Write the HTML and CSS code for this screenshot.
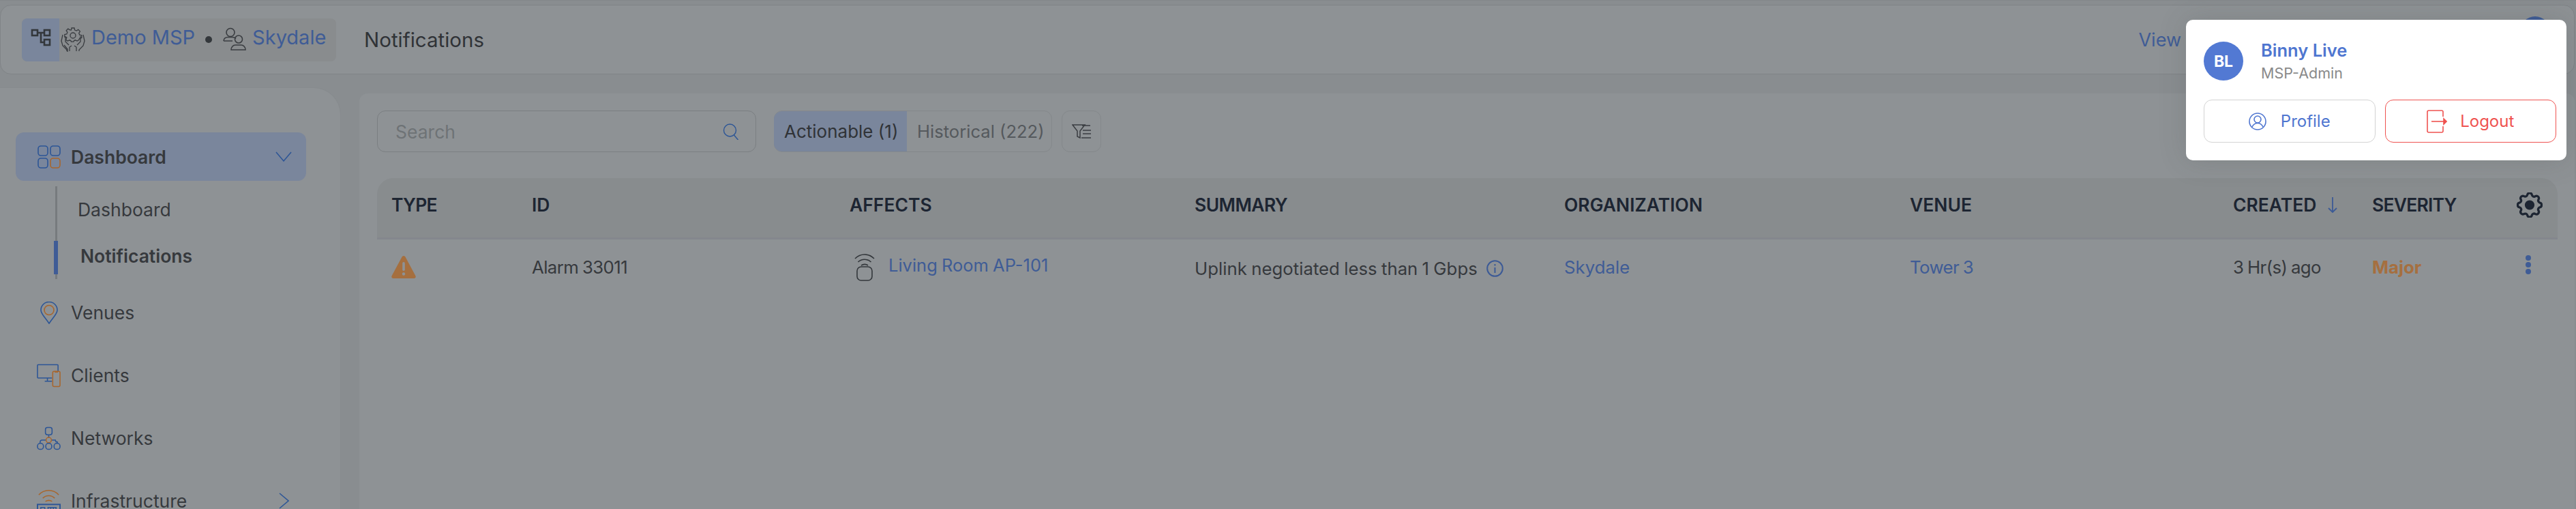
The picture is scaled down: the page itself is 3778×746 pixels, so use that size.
FILE: index.html
```html
<!DOCTYPE html>
<html lang="en">
<head>
<meta charset="utf-8">
<title>Notifications</title>
<link rel="stylesheet" href="styles.css">
</head>
<body>
<div class="page">
  <header class="topbar">
    <div class="crumbs">
      <span class="crumb-toggle">
        <svg width="30" height="26" viewBox="0 0 30 26" fill="none" stroke="#33373b" stroke-width="2.6"><rect x="2" y="2" width="8" height="8"/><rect x="20" y="2" width="8" height="8"/><rect x="20" y="16" width="8" height="8"/><path d="M10 6h10M15 6v14h5"/></svg>
      </span>
      <svg class="crumb-gear" width="36" height="36" viewBox="0 0 36 36" fill="none" stroke="#3a3d41" stroke-width="1.3"><circle cx="18" cy="12" r="4"/><path d="M16 1h4l.6 3 2.6 1.100 2.600-1.700 2.600 2.600-1.700 2.600 1.100 2.600 3 .6v3.600l-3 .6-1.200 2.600-2.400 1.500-2.800-1.300-1.800.8-.6 1.500h-3.600l-.6-1.500-1.800-.8-2.800 1.300-2.400-1.500L8.800 14.800l-3-.6v-3.600l3-.6 1.100-2.600-1.700-2.600 2.600-2.600 2.600 1.700L15.400 4z"/><path d="M3 11 1 20l2 7 6 6v2M7 13v8l5 5M10 36l0-4-5-6M33 11l2 9-2 7-6 6v2M29 13v8l-5 5M13 35v-6l3-2M23 35v-6l-3-2"/></svg>
      <a class="crumb-link crumb-msp">Demo MSP</a>
      <span class="crumb-dot"></span>
      <svg class="crumb-people" width="34" height="34" viewBox="0 0 34 34" fill="none" stroke="#3a3d41" stroke-width="1.6"><circle cx="11" cy="7.500" r="6"/><path d="M1 20c0-3.500 3-5.500 6-5.500h7c2 0 3.500.5 5 2M1 20h13"/><circle cx="23" cy="17.500" r="5.500"/><path d="M12 33c0-4 3-7 6-7h9c3 0 6 3 6 7zM12 33h21"/></svg>
      <a class="crumb-link">Skydale</a>
    </div>
    <h1 class="page-title">Notifications</h1>
    <a class="view-link">View</a>
    <span class="user-peek"></span>
  </header>

  <div class="body-row">
    <nav class="sidebar">
      <div class="nav-item nav-active">
        <span class="nav-icon">
          <svg width="34" height="34" viewBox="0 0 34 34" fill="none" stroke-width="1.600"><rect x="1" y="1" width="14" height="14" rx="4" stroke="#2c5596"/><rect x="19" y="1" width="14" height="14" rx="4" stroke="#2c5596"/><rect x="1" y="19" width="14" height="14" rx="4" stroke="#2c5596"/><rect x="19" y="19" width="14" height="14" rx="4" stroke="#a8662d"/></svg>
        </span>
        <span class="nav-label">Dashboard</span>
        <svg class="nav-chevron" width="24" height="15" viewBox="0 0 24 15" fill="none" stroke="#2c5596" stroke-width="1.500"><path d="M1 1l11 13L23 1"/></svg>
      </div>
      <div class="sub-list">
        <div class="sub-item">Dashboard</div>
        <div class="sub-item sub-current">Notifications</div>
      </div>
      <div class="nav-item">
        <span class="nav-icon">
          <svg width="26" height="33" viewBox="0 0 26 33" fill="none" stroke-width="1.600"><path d="M13 32C7 23 1 18 1 12.500A12 12 0 0 1 25 12.500C25 18 19 23 13 32z" stroke="#2c5596"/><circle cx="13" cy="12.500" r="7" stroke="#a8662d"/></svg>
        </span>
        <span class="nav-label">Venues</span>
      </div>
      <div class="nav-item">
        <span class="nav-icon">
          <svg width="36" height="35" viewBox="0 0 36 35" fill="none" stroke-width="1.600"><path d="M23 21H2a1 1 0 0 1-1-1V2a1 1 0 0 1 1-1h29a1 1 0 0 1 1 1v9M16 21v5M12 26h11" stroke="#2c5596"/><rect x="24" y="11" width="11" height="23" rx="2" stroke="#a8662d"/><path d="M27 12h5" stroke="#a8662d" stroke-width="2"/></svg>
        </span>
        <span class="nav-label">Clients</span>
      </div>
      <div class="nav-item">
        <span class="nav-icon">
          <svg width="36" height="35" viewBox="0 0 36 35" fill="none" stroke-width="1.600"><rect x="13" y="1" width="10" height="11" rx="3" stroke="#2c5596"/><path d="M18 12v5M5 25v-2a3 3 0 0 1 3-3h6M31 25v-2a3 3 0 0 1-3-3h-6M18 24v1" stroke="#2c5596"/><ellipse cx="18" cy="20" rx="4" ry="4" stroke="#a8662d"/><rect x="1" y="25" width="9" height="9" rx="4" stroke="#2c5596"/><rect x="13.500" y="25" width="9" height="9" rx="4" stroke="#2c5596"/><rect x="26" y="25" width="9" height="9" rx="4" stroke="#2c5596"/></svg>
        </span>
        <span class="nav-label">Networks</span>
      </div>
      <div class="nav-item">
        <span class="nav-icon">
          <svg width="36" height="34" viewBox="0 0 36 34" fill="none" stroke-width="1.600"><path d="M3 8c8-9 22-9 30 0M9 13c5-5 13-5 18 0M13 18c3-2 7-2 10 0" stroke="#a8662d"/><rect x="1" y="22.500" width="34" height="13" stroke="#2c5596" stroke-width="2"/><path d="M6 35v-8h6v8M17 27v8M21 27v8M25 27v8M29 27v8M16 27h14" stroke="#2c5596"/></svg>
        </span>
        <span class="nav-label">Infrastructure</span>
        <svg class="nav-chevron nav-chevron-side" width="15" height="24" viewBox="0 0 15 24" fill="none" stroke="#2c5596" stroke-width="1.500"><path d="M1 1l13 11L1 23"/></svg>
      </div>
    </nav>

    <main class="content">
      <div class="toolbar">
        <div class="search">
          <span class="search-text">Search</span>
          <svg width="24" height="24" viewBox="0 0 24 24" fill="none" stroke="#2c5596" stroke-width="1.400"><circle cx="10.500" cy="10" r="9"/><path d="M16.500 17l6 7"/></svg>
        </div>
        <div class="tabs">
          <span class="tab tab-on">Actionable (1)</span>
          <span class="tab">Historical (222)</span>
        </div>
        <span class="filter-btn">
          <svg width="29" height="22" viewBox="0 0 29 22" fill="none" stroke="#3a3d41" stroke-width="1.500"><path d="M1 1h18l-7 9v10l-4-2v-8zM15 2h12M16 9h12M14 20h14M16 14h12"/></svg>
        </span>
      </div>

      <div class="table">
        <div class="thead">
          <span class="th-tight">TYPE</span>
          <span>ID</span>
          <span>AFFECTS</span>
          <span class="th-slim">SUMMARY</span>
          <span>ORGANIZATION</span>
          <span>VENUE</span>
          <span class="th-sort">CREATED
            <svg width="14" height="24" viewBox="0 0 14 24" fill="none" stroke="#3c5a96" stroke-width="1.800"><path d="M7 1v22M1 17l6 6 6-6"/></svg>
          </span>
          <span class="th-tight">SEVERITY</span>
          <svg class="th-gear" width="38" height="37" viewBox="3 2.500 18 19" fill="none" stroke="#1d2532" stroke-width="1.700"><path d="M10.300 4.300c.4-1.800 3-1.800 3.400 0a1.700 1.700 0 0 0 2.600 1.100c1.500-.9 3.300.8 2.400 2.400a1.700 1.700 0 0 0 1 2.500c1.800.4 1.800 3 0 3.400a1.700 1.700 0 0 0-1 2.600c.9 1.500-.9 3.300-2.400 2.400a1.700 1.700 0 0 0-2.600 1c-.4 1.800-3 1.800-3.400 0a1.700 1.700 0 0 0-2.500-1c-1.600.9-3.300-.9-2.400-2.400a1.700 1.700 0 0 0-1.100-2.600c-1.800-.4-1.800-3 0-3.400a1.700 1.700 0 0 0 1.100-2.500c-.9-1.600.8-3.300 2.400-2.400a1.700 1.700 0 0 0 2.500-1.100z"/><circle cx="12" cy="12" r="2.800" fill="#1d2532"/></svg>
        </div>
        <div class="trow">
          <svg width="36" height="33" viewBox="0 0 36 33"><path d="M18 0c1.200 0 2 .7 2.600 1.800l14.800 27.400c.9 1.800-.2 3.800-2.200 3.800H2.800C.8 33-.3 31 .6 29.200L15.400 1.800C16 .7 16.800 0 18 0z" fill="#a56f3f"/><rect x="16.200" y="9" width="3.600" height="13" rx="1.800" fill="#8e9295"/><circle cx="18" cy="26.500" r="2.200" fill="#8e9295"/></svg>
          <span class="cell-tight">Alarm 33011</span>
          <span class="cell-device">
            <svg width="30" height="41" viewBox="0 0 30 41" fill="none" stroke="#33373b" stroke-width="1.600"><path d="M1 8c8-8 20-8 28 0M5.500 13c5-5 14-5 19 0M10 18c3-2 7-2 10 0"/><rect x="4" y="20" width="22" height="20" rx="6"/></svg>
            <a class="link link-up">Living Room AP-101</a>
          </span>
          <span class="cell-summary">Uplink negotiated less than 1 Gbps
            <svg width="25" height="25" viewBox="0 0 25 25" fill="none" stroke="#3c5a96" stroke-width="2"><circle cx="12.500" cy="12.500" r="11.300"/><path d="M12.500 11v8M12.500 6v2.500"/></svg>
          </span>
          <a class="link">Skydale</a>
          <a class="link cell-tight">Tower 3</a>
          <span class="cell-tight">3 Hr(s) ago</span>
          <span class="severity">Major</span>
          <svg class="row-menu" width="10" height="30" viewBox="0 0 10 30" fill="#3f5c96"><circle cx="5" cy="5" r="4"/><circle cx="5" cy="15" r="4"/><circle cx="5" cy="25" r="4"/></svg>
        </div>
      </div>
    </main>
  </div>

  <aside class="popup">
    <div class="popup-user">
      <span class="avatar">BL</span>
      <div class="popup-id">
        <div class="popup-name">Binny Live</div>
        <div class="popup-role">MSP-Admin</div>
      </div>
    </div>
    <div class="popup-actions">
      <button class="pbtn pbtn-profile">
        <svg width="26" height="26" viewBox="0 0 26 26" fill="none" stroke="#4f76d0" stroke-width="1.600"><circle cx="13" cy="13" r="12"/><circle cx="13" cy="10" r="5"/><path d="M5 21c2-4 5-5.500 8-5.500s6 1.500 8 5.500"/></svg>
        Profile
      </button>
      <button class="pbtn pbtn-logout">
        <svg width="30" height="34" viewBox="0 0 30 34" fill="none" stroke="#ef5350" stroke-width="1.600"><path d="M24 10V3a2 2 0 0 0-2-2H3a2 2 0 0 0-2 2v28a2 2 0 0 0 2 2h19a2 2 0 0 0 2-2v-7"/><path d="M7 17h20"/><path d="M25 13l4 4-4 4z" fill="#ef5350"/></svg>
        Logout
      </button>
    </div>
  </aside>
</div>
</body>
</html>
```
FILE: styles.css
```css
* { box-sizing: border-box; }
html, body { margin: 0; height: 100%; }
body { overflow: hidden; background: #898d90; font-family: "Inter", "Liberation Sans", sans-serif; color: #36393d; }
.page { position: relative; width: 3778px; height: 746px; overflow: hidden; padding-top: 6px; display: flex; flex-direction: column; border-top: 1px solid #83878a; }

.topbar { flex: none; height: 102px; margin-right: 2px; display: flex; align-items: center; padding-left: 32px; background: #8e9295; border: 1px solid #808487; border-radius: 16px; }
.crumbs { display: flex; align-items: center; width: 461px; height: 63px; background: #898c8e; border-radius: 8px; margin-left: -1px; }
.crumb-toggle { width: 55px; height: 63px; display: flex; align-items: center; justify-content: center; background: #7a869c; border-radius: 8px 0 0 8px; padding-bottom: 6px; }
.crumb-gear { margin-left: 2px; }
.crumb-link { font-size: 29px; color: #3f5c96; margin-bottom: 8px; white-space: nowrap; }
.crumb-msp { margin-left: 9px; }
.crumb-dot { width: 10px; height: 10px; border-radius: 50%; background: #33373b; margin: 0 16px 0 15px; }
.crumb-people { margin-right: 9px; margin-bottom: 3px; }
.page-title { margin: 0 0 0 41px; font-size: 29.500px; font-weight: 400; color: #303337; }
.view-link { margin-left: auto; margin-right: 576px; font-size: 27px; color: #3f5c96; }
.user-peek { position: absolute; top: 23px; left: 3696px; width: 44px; height: 44px; border-radius: 50%; background: #3f5c96; }

.body-row { flex: 1; display: flex; min-height: 0; padding-top: 19px; align-items: stretch; }
.sidebar { flex: none; width: 500px; height: 640px; padding: 65px 0 0 23px; background: #8e9295; border: 1px solid #878b8e; border-left: 0; border-radius: 0 40px 0 0; }
.nav-item { display: flex; align-items: center; width: 426px; height: 92px; padding: 0 21px 0 31px; }
.nav-active { height: 71px; background: #7a869c; border-radius: 12px; }
.nav-icon { flex: none; width: 35px; display: flex; justify-content: center; margin-right: 15px; }
.nav-label { font-size: 26.500px; line-height: 26px; color: #36393d; }
.nav-active .nav-label { font-weight: 600; }
.nav-chevron { margin-left: auto; }
.nav-chevron-side { margin-right: 4px; }
.sub-list { margin: 8px 0 3px 58px; border-left: 3px solid #777b7e; height: 136px; }
.sub-item { position: relative; display: flex; align-items: center; height: 68px; padding-left: 30px; font-size: 26.500px; color: #36393d; }
.sub-current { padding-left: 34px; font-weight: 600; }
.sub-current::before { content: ""; position: absolute; left: -5px; top: 12px; width: 6px; height: 49px; background: #3f5c96; }

.content { flex: 1; margin: 9px 2px 0 27px; padding: 25px 25px 0 26px; background: #8e9295; border-radius: 12px 12px 0 0; min-width: 0; }
.toolbar { display: flex; align-items: center; height: 61px; }
.search { display: flex; align-items: center; justify-content: space-between; width: 556px; height: 61px; padding: 0 24px 0 26px; border: 1px solid #7b7f82; border-radius: 12px; }
.search-text { font-size: 26.500px; color: #6e7376; }
.tabs { display: flex; width: 408px; height: 61px; margin-left: 26px; border: 1px solid #84888b; border-radius: 12px; }
.tab { display: flex; align-items: center; height: 59px; padding: 0 15px; font-size: 25.600px; color: #55595d; white-space: nowrap; }
.tab-on { width: 195px; margin-left: -1px; background: #7a869c; color: #303337; font-size: 26px; border-radius: 12px 0 0 12px; }
.filter-btn { display: flex; align-items: center; justify-content: center; width: 58px; height: 61px; margin-left: 14px; border: 1px solid #84888b; border-radius: 12px; }

.table { margin-top: 38px; }
.thead, .trow { display: grid; grid-template-columns: 206px 466px 506px 542px 507px 474px 204px 212px 1fr; padding-left: 21px; }
.thead { height: 90px; padding-top: 24px; background: #888c8e; border-bottom: 3px solid #84878d; border-radius: 24px 24px 0 0; font-size: 26.500px; line-height: 30px; font-weight: 600; color: #1d2532; }
.th-tight { letter-spacing: -.8px; }
.th-slim { letter-spacing: -.6px; }
.th-sort { display: flex; align-items: center; gap: 16px; height: 30px; }
.th-gear { margin-top: -3px; }
.trow { height: 80px; align-items: center; font-size: 25.800px; word-spacing: -1px; color: #36393d; }
.cell-tight { letter-spacing: -.6px; }
.cell-device { display: flex; align-items: center; gap: 20px; margin-left: 7px; }
.cell-summary { display: flex; align-items: center; gap: 13px; padding-top: 4px; }
.link { color: #3f5c96; white-space: nowrap; }
.link-up { margin-bottom: 6px; font-size: 25.500px; }
.severity { font-weight: 700; color: #a56f3f; }
.row-menu { margin: -6px 0 0 12px; }

.popup { position: absolute; left: 3206px; top: 28px; width: 558px; height: 206px; padding: 32px 15px 0 26px; background: #fff; border-radius: 10px; box-shadow: 0 0 40px rgba(60, 64, 67, .18); }
.popup-user { display: flex; align-items: center; height: 57px; gap: 26px; }
.avatar { width: 58px; height: 57px; display: flex; align-items: center; justify-content: center; border-radius: 50%; background: #5279d3; color: #fff; font-size: 23px; font-weight: 700; }
.popup-name { font-size: 25.500px; line-height: 32px; font-weight: 600; color: #4f76d0; }
.popup-role { font-size: 21.500px; line-height: 28px; margin-top: 3px; color: #8a8a8a; }
.popup-actions { display: flex; gap: 14px; margin-top: 28px; }
.pbtn { flex: 1; display: flex; align-items: center; justify-content: center; height: 63px; background: #fff; border-radius: 12px; font-family: inherit; font-size: 24px; }
.pbtn-profile { gap: 21px; border: 1.500px solid #d3d3d3; color: #4f76d0; }
.pbtn-logout { gap: 19px; border: 1.500px solid #ef5350; color: #ef5350; }
```
